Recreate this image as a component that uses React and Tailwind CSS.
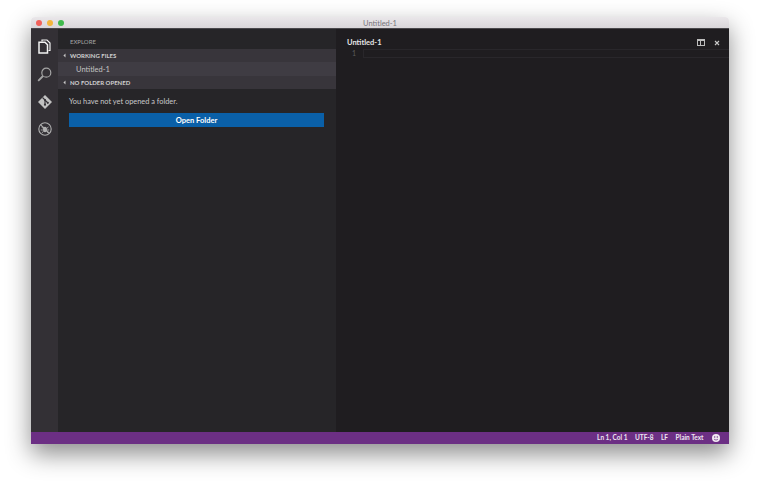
import React from "react";

const Files = () => (
  <svg width="13" height="15" viewBox="0 0 13 15" fill="none" stroke="#f2f2f2">
    <path d="M4 2.500V1h5l3 3v7.500h-1.500" strokeWidth="1.200" />
    <path d="M1 3.200h6l2.500 2.500v8.300h-8.500z" fill="#333035" strokeWidth="1.500" />
  </svg>
);

const Search = () => (
  <svg width="15" height="15" viewBox="0 0 15 15" fill="none" stroke="#a5a5a5" strokeWidth="1.200">
    <circle cx="9.300" cy="5.700" r="4.500" />
    <path d="M6 9L1.200 13.800" strokeWidth="1.800" />
  </svg>
);

const Git = () => (
  <svg width="14" height="14" viewBox="0 0 14 14">
    <path d="M7 0l7 7-7 7-7-7z" fill="#c2c2c2" />
    <path d="M4.500 2.500L7 5M7 5v4.500M7 5l2.800 2.800" stroke="#333035" strokeWidth="1.100" />
    <circle cx="7" cy="5" r="1.100" fill="#333035" />
    <circle cx="7" cy="9.700" r="1.100" fill="#333035" />
    <circle cx="9.800" cy="7.800" r="1.100" fill="#333035" />
  </svg>
);

const Debug = () => (
  <svg width="14" height="14" viewBox="0 0 14 14" fill="none" stroke="#b0b0b0">
    <circle cx="7" cy="7" r="6.200" strokeWidth="1.100" />
    <path d="M2.800 2.800l8.400 8.400" strokeWidth="1.100" />
    <ellipse cx="7" cy="7.500" rx="2" ry="2.800" fill="#b0b0b0" stroke="none" />
    <path d="M3.500 5l2 1.500M10.500 5l-2 1.500M2.800 8h2M11.200 8h-2M3.800 10.800l1.700-1.300M10.200 10.800l-1.700-1.300" strokeWidth="0.900" />
  </svg>
);

const SectionHeader = ({ label }) => (
  <div className="flex h-[13px] items-center bg-[#38353b] pl-[6px] text-[6px] leading-none font-bold text-[#d0d0d0]">
    <span className="mr-[3px] h-0 w-0 border-t-[3px] border-l-[3px] border-t-transparent border-l-[#c8c8c8] rotate-45"></span>
    <span>{label}</span>
  </div>
);

const App = () => {
  return (
    <div className="h-[488px] w-[760px] overflow-hidden bg-white pt-[17px] pl-[31px] font-['Lato','Liberation_Sans',sans-serif]">
      <div className="flex h-[427px] w-[698px] flex-col overflow-hidden rounded-t-[4px] shadow-[0_10px_24px_rgba(0,0,0,0.45)]">
        {/* title bar */}
        <div className="relative flex h-[12px] shrink-0 items-center justify-center border-b border-[#4a484c] bg-gradient-to-b from-[#eae7ea] to-[#d9d6d9]">
          <div className="absolute top-[3px] left-[5px] flex gap-[5px]">
            <span className="h-[6px] w-[6px] rounded-full bg-[#f2615a]"></span>
            <span className="h-[6px] w-[6px] rounded-full bg-[#f4b63c]"></span>
            <span className="h-[6px] w-[6px] rounded-full bg-[#3fba4c]"></span>
          </div>
          <span className="pt-[3px] text-[7.500px] leading-none text-[#77747a]">Untitled-1</span>
        </div>

        <div className="flex min-h-0 flex-1">
          {/* activity bar */}
          <div className="flex w-[27px] shrink-0 flex-col items-center gap-[13px] bg-[#333035] pt-[10px]">
            <Files />
            <Search />
            <Git />
            <Debug />
          </div>

          {/* sidebar */}
          <div className="flex w-[278px] shrink-0 flex-col bg-[#262528]">
            <div className="flex h-[20px] items-end pb-[4px] pl-[12px] text-[6px] leading-none text-[#a5a5a5]">EXPLORE</div>
            <SectionHeader label="WORKING FILES" />
            <div className="flex h-[14px] items-center bg-[#3f3c43] pt-px pl-[18px] text-[7.500px] leading-none text-[#c4c4c4]">Untitled-1</div>
            <SectionHeader label="NO FOLDER OPENED" />
            <div className="pt-[8px] pl-[11px]">
              <p className="text-[7.400px] leading-[10px] text-[#c8c8c8]">You have not yet opened a folder.</p>
              <button className="mt-[6px] flex h-[14px] w-[255px] items-center justify-center bg-[#0a60a8] pt-px text-[7.500px] leading-none font-bold text-white">
                Open Folder
              </button>
            </div>
          </div>

          {/* editor */}
          <div className="flex min-w-0 flex-1 flex-col bg-[#1f1d20]">
            <div className="flex h-[20px] shrink-0 items-end justify-between pr-[9px] pb-[3px] pl-[11px]">
              <span className="text-[7.500px] leading-none font-bold text-[#e6e6e6]">Untitled-1</span>
              <div className="flex items-center gap-[9px]">
                <span className="flex h-[7px] w-[8px] border border-t-2 border-[#bdbdbd]">
                  <span className="w-1/2 border-r border-[#bdbdbd]"></span>
                </span>
                <svg width="6" height="6" viewBox="0 0 6 6" stroke="#c8c8c8" strokeWidth="1.100">
                  <path d="M1 1l4 4M5 1L1 5" />
                </svg>
              </div>
            </div>
            <div className="flex h-[9px] shrink-0 items-center">
              <span className="w-[27px] pr-[7px] text-right text-[7px] leading-none text-[#5a5a5a]">1</span>
              <div className="h-[9px] flex-1 border-y border-l border-[#29272b]"></div>
            </div>
          </div>
        </div>

        {/* status bar */}
        <div className="flex h-[12px] shrink-0 items-center justify-end gap-[7.500px] bg-[#6c2f84] pr-[9px] text-[6.500px] leading-none font-bold text-[#eee6f0]">
          <span className="pt-px">Ln 1, Col 1</span>
          <span className="pt-px">UTF-8</span>
          <span className="pt-px">LF</span>
          <span className="pt-px">Plain Text</span>
          <svg width="8" height="8" viewBox="0 0 8 8" className="ml-[1px]">
            <circle cx="4" cy="4" r="4" fill="#f0e8f2" />
            <circle cx="2.700" cy="3" r="0.700" fill="#6c2f84" />
            <circle cx="5.300" cy="3" r="0.700" fill="#6c2f84" />
            <path d="M2 5c1 1.300 3 1.300 4 0" stroke="#6c2f84" strokeWidth="0.700" fill="none" />
          </svg>
        </div>
      </div>
    </div>
  );
};

export default App;
